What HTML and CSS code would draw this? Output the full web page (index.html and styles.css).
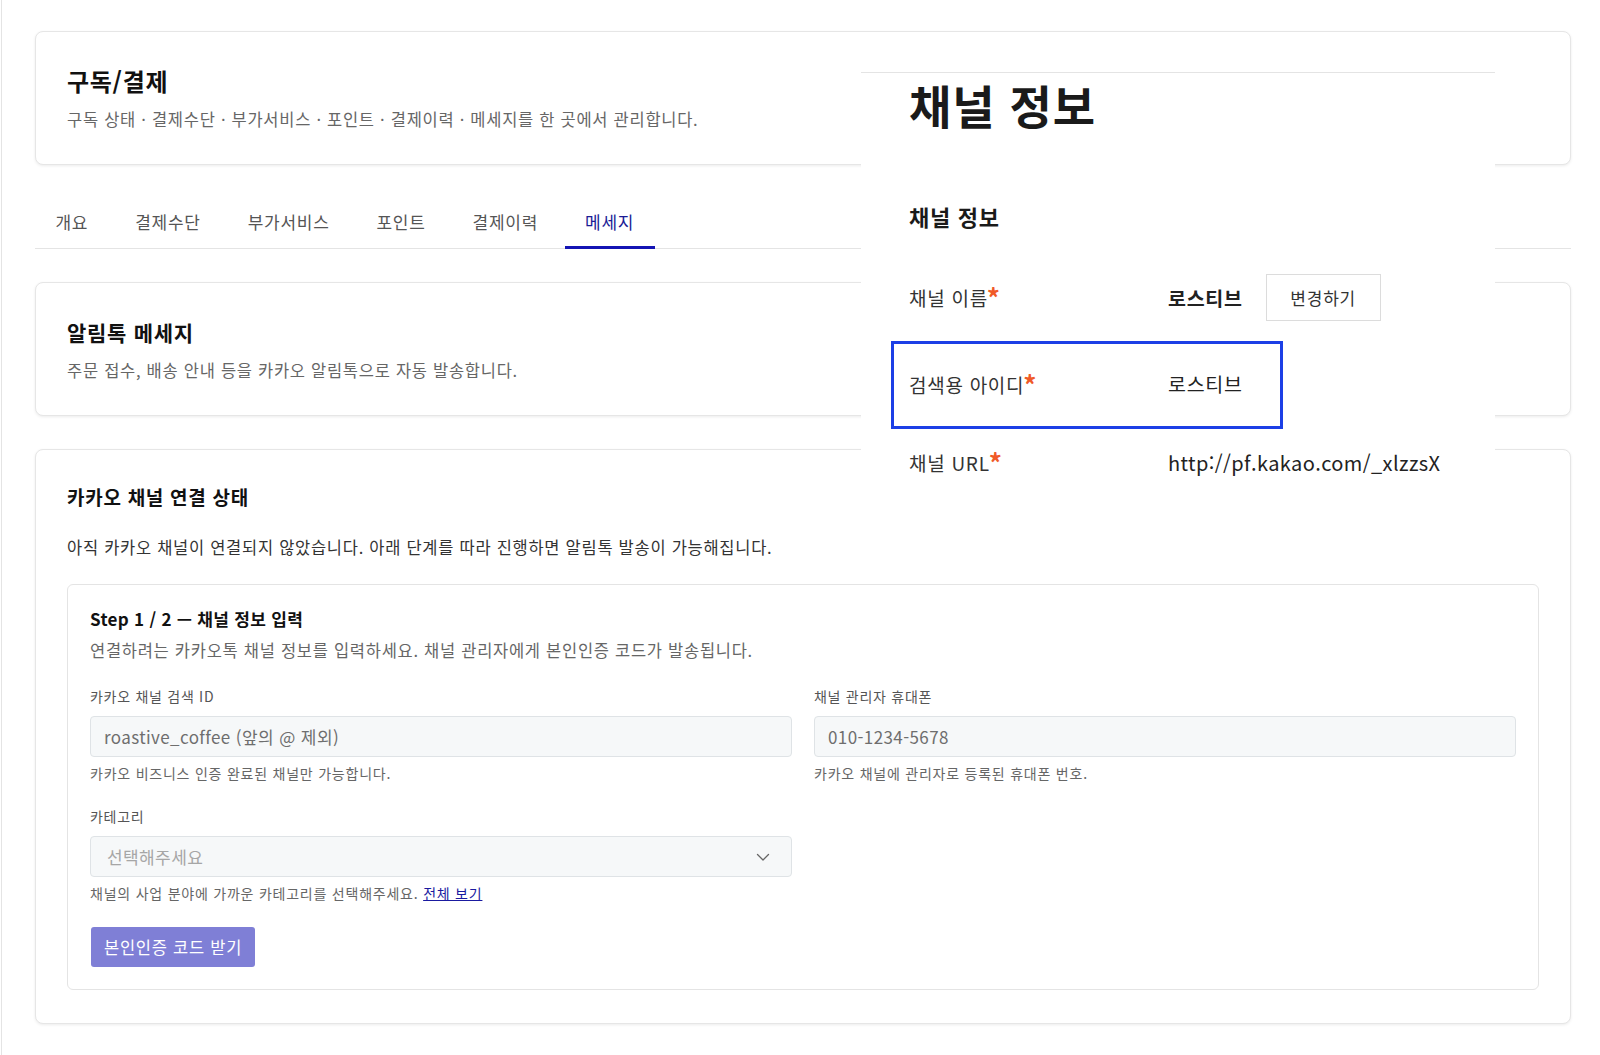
FILE: index.html
```html
<!DOCTYPE html>
<html lang="ko">
<head>
  <meta charset="UTF-8" />
  <meta name="viewport" content="width=device-width, initial-scale=1.0"/>
  <title>구독/결제 - 메세지</title>
  <link rel="stylesheet" href="styles.css">
</head>
<body>

  <main class="page">

    <!-- Page header -->
    <section class="card">
      <h1 class="card-title page-title">구독/결제</h1>
      <p class="card-desc">구독 상태 · 결제수단 · 부가서비스 · 포인트 · 결제이력 · 메세지를 한 곳에서 관리합니다.</p>
    </section>

    <!-- Tabs -->
    <nav class="tabs">
      <a class="tab">개요</a>
      <a class="tab">결제수단</a>
      <a class="tab">부가서비스</a>
      <a class="tab">포인트</a>
      <a class="tab">결제이력</a>
      <a class="tab active">메세지</a>
    </nav>

    <section class="card gap">
      <h2 class="card-title">알림톡 메세지</h2>
      <p class="card-desc">주문 접수, 배송 안내 등을 카카오 알림톡으로 자동 발송합니다.</p>
    </section>

    <!-- Kakao channel -->
    <section class="card gap channel-card">
      <h2 class="section-title">카카오 채널 연결 상태</h2>
      <p class="section-desc">아직 카카오 채널이 연결되지 않았습니다. 아래 단계를 따라 진행하면 알림톡 발송이 가능해집니다.</p>

      <div class="step-box">
        <h3 class="step-title">Step 1 / 2 — 채널 정보 입력</h3>
        <p class="step-desc">연결하려는 카카오톡 채널 정보를 입력하세요. 채널 관리자에게 본인인증 코드가 발송됩니다.</p>

        <div class="form-grid">
          <div class="field">
            <label class="field-label">카카오 채널 검색 ID</label>
            <input class="input" type="text" placeholder="roastive_coffee (앞의 @ 제외)">
            <p class="field-help">카카오 비즈니스 인증 완료된 채널만 가능합니다.</p>
          </div>
          <div class="field">
            <label class="field-label">채널 관리자 휴대폰</label>
            <input class="input" type="text" placeholder="010-1234-5678">
            <p class="field-help">카카오 채널에 관리자로 등록된 휴대폰 번호.</p>
          </div>
          <div class="field">
            <label class="field-label">카테고리</label>
            <div class="select">
              <span>선택해주세요</span>
              <svg width="16" height="14" viewBox="0 0 16 14" fill="none" stroke="#666" stroke-width="1.3" stroke-linecap="round" stroke-linejoin="round"><path d="M2.5 4.5l5.5 5.5 5.5-5.5"/></svg>
            </div>
            <p class="field-help">채널의 사업 분야에 가까운 카테고리를 선택해주세요. <a class="link">전체 보기</a></p>
          </div>
        </div>

        <button class="btn-primary">본인인증 코드 받기</button>
      </div>
    </section>
  </main>

  <!-- Channel info panel (laid over the page) -->
  <div class="channel-panel">
    <h1 class="panel-title">채널 정보</h1>
    <h2 class="panel-subtitle">채널 정보</h2>

    <div class="info-row first">
      <span class="info-label">채널 이름<em>*</em></span>
      <strong class="info-value">로스티브</strong>
      <button class="btn-outline">변경하기</button>
    </div>

    <div class="info-row highlight">
      <span class="info-label">검색용 아이디<em>*</em></span>
      <span class="info-value">로스티브</span>
    </div>

    <div class="info-row last">
      <span class="info-label">채널 URL<em>*</em></span>
      <span class="info-value url">http://pf.kakao.com/_xlzzsX</span>
    </div>
  </div>

</body>
</html>
```

FILE: styles.css
```css
* {
  margin: 0;
  padding: 0;
  box-sizing: border-box;
}
body {
  font-family: "Noto Sans CJK KR", "Noto Sans", sans-serif;
  background: #fff;
  color: #222;
  width: 1600px;
  height: 1055px;
  overflow: hidden;
  position: relative;
  letter-spacing: 0.045em;
}

.page {
  margin-left: 1px;
  border-left: 1px solid #e4e4e4;
  min-height: 1055px;
  padding: 31px 29px 0 33px;
}

/* Cards */
.card {
  background: #fff;
  border: 1px solid #e6e6e6;
  border-radius: 8px;
  box-shadow: 0 1px 3px rgba(0, 0, 0, 0.08);
  padding: 33px 31px 33px;
}
.card.gap {
  margin-top: 33px;
}
.card-title {
  font-size: 21px;
  font-weight: 700;
  line-height: 32px;
  color: #111;
}
.page-title {
  font-size: 24px;
}
.card-desc {
  margin-top: 10px;
  font-size: 16.5px;
  line-height: 24px;
  color: #666;
}

/* Tabs */
.tabs {
  margin-top: 33px;
  display: flex;
  gap: 6px;
  border-bottom: 1px solid #e4e4e4;
}
.tab {
  padding: 12px 20.5px 0;
  height: 51px;
  font-size: 17px;
  line-height: 24px;
  color: #555;
  border-bottom: 3px solid transparent;
  margin-bottom: -1px;
}
.tab.active {
  color: #1b1b95;
  border-bottom-color: #1414b4;
}

/* Kakao channel card */
.channel-card {
  margin-top: 35px;
  padding: 31px 31px 33px;
}
.section-title {
  font-size: 19px;
  font-weight: 700;
  line-height: 32px;
  color: #111;
}
.section-desc {
  margin-top: 21px;
  font-size: 16.5px;
  line-height: 26px;
  color: #333;
}

.step-box {
  margin-top: 24px;
  border: 1px solid #e4e4e4;
  border-radius: 6px;
  padding: 22px 22px 22px;
}
.step-title {
  font-size: 17px;
  font-weight: 700;
  line-height: 24px;
  color: #111;
  letter-spacing: 0.3px;
}
.step-desc {
  margin-top: 7px;
  font-size: 16.5px;
  line-height: 24px;
  color: #666;
}

.form-grid {
  margin-top: 24px;
  display: grid;
  grid-template-columns: 1fr 1fr;
  column-gap: 22px;
  row-gap: 23px;
}
.field-label {
  display: block;
  font-size: 14px;
  line-height: 20px;
  color: #555;
  margin-bottom: 10px;
}
.input,
.select {
  width: 100%;
  height: 41px;
  background: #f6f8f9;
  border: 1px solid #dfe3e6;
  border-radius: 4px;
  font-family: inherit;
  font-size: 17px;
  letter-spacing: 0.4px;
  color: #333;
  padding: 0 13px;
  outline: none;
}
.input::placeholder {
  color: #6e6e6e;
}
.select {
  display: flex;
  align-items: center;
  justify-content: space-between;
  padding: 0 20px 0 16px;
  color: #a6a6a6;
}
.field-help {
  margin-top: 6px;
  font-size: 14px;
  line-height: 20px;
  color: #666;
  letter-spacing: 0.055em;
}
.link {
  color: #1a1aa0;
  text-decoration: underline;
}

.btn-primary {
  margin-top: 24px;
  margin-left: 1px;
  height: 40px;
  padding: 0 13px;
  border: none;
  border-radius: 3px;
  background: #7f7fd6;
  color: #fff;
  font-family: inherit;
  font-size: 16.5px;
  letter-spacing: 0.045em;
}

/* Channel info panel */
.channel-panel {
  position: absolute;
  left: 861px;
  top: 72px;
  width: 634px;
  height: 430px;
  background: #fff;
  border-top: 1px solid #e4e4e4;
  padding-left: 48px;
}
.panel-title {
  margin-top: 0;
  font-size: 46px;
  font-weight: 700;
  line-height: 62px;
  letter-spacing: 1px;
  color: #1a1a1a;
}
.panel-subtitle {
  margin-top: 66px;
  font-size: 22px;
  font-weight: 700;
  line-height: 30px;
  color: #1a1a1a;
}
.info-row {
  display: flex;
  align-items: center;
  font-size: 19px;
  line-height: 30px;
  color: #222;
}
.info-row.first {
  margin-top: 43px;
  height: 47px;
}
.info-row.highlight {
  margin-top: 20px;
  margin-left: -18px;
  width: 392px;
  height: 88px;
  border: 3px solid #1c3fe6;
  padding: 25px 0 27px 15px;
  align-items: flex-start;
}
.info-row.last {
  margin-top: 18px;
}
.info-label {
  width: 259px;
  flex-shrink: 0;
  color: #333;
}
.info-label em {
  font-style: normal;
  font-weight: 700;
  font-size: 26px;
  line-height: 1;
  position: relative;
  top: 2px;
  margin-left: -1px;
  color: #f05a28;
}
.info-value {
  color: #222;
  font-size: 19.5px;
}
strong.info-value {
  font-weight: 700;
}
.info-value.url {
  font-size: 20px;
  letter-spacing: 0.4px;
}
.btn-outline {
  margin-left: 23px;
  width: 115px;
  height: 47px;
  background: #fff;
  border: 1px solid #dcdcdc;
  font-family: inherit;
  font-size: 17px;
  letter-spacing: 0.045em;
  color: #333;
}
```
